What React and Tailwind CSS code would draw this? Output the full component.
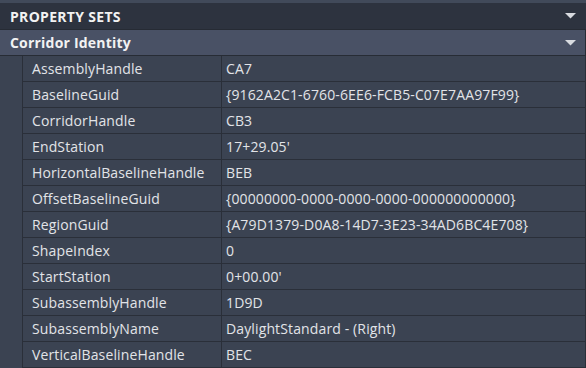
import React from "react";

const rows = [
  ["AssemblyHandle", "CA7"],
  ["BaselineGuid", "{9162A2C1-6760-6EE6-FCB5-C07E7AA97F99}"],
  ["CorridorHandle", "CB3"],
  ["EndStation", "17+29.05'"],
  ["HorizontalBaselineHandle", "BEB"],
  ["OffsetBaselineGuid", "{00000000-0000-0000-0000-000000000000}"],
  ["RegionGuid", "{A79D1379-D0A8-14D7-3E23-34AD6BC4E708}"],
  ["ShapeIndex", "0"],
  ["StartStation", "0+00.00'"],
  ["SubassemblyHandle", "1D9D"],
  ["SubassemblyName", "DaylightStandard - (Right)"],
  ["VerticalBaselineHandle", "BEC"],
];

const Caret = () => (
  <svg width="11" height="6" viewBox="0 0 11 6" className="text-[#d8dbe0]">
    <path d="M0 0h11L5.5 5.5z" fill="currentColor" />
  </svg>
);

export default function App() {
  return (
    <div
      className="w-[586px] h-[368px] bg-[#3b4352] overflow-hidden text-[14px]"
      style={{ fontFamily: '"Open Sans", "DejaVu Sans", sans-serif' }}
    >
      <div className="h-[3px] bg-[#414a5a]" />
      {/* section title */}
      <div className="h-[27px] bg-[#2d333f] border-b border-[#262b34] flex items-center justify-between pl-[10px] pr-[10px]">
        <span className="font-bold text-[#f2f2f2] tracking-[0.3px]">PROPERTY SETS</span>
        <Caret />
      </div>
      {/* group header */}
      <div className="h-[26px] bg-[#495165] border-b border-r border-[#272c35] flex items-center justify-between pl-[10px] pr-[9px]">
        <span className="font-bold text-[#f2f2f2] tracking-[0.2px]">Corridor Identity</span>
        <Caret />
      </div>
      <div className="flex">
        <div className="w-[23px] border-r border-[#2a2f39] bg-[#3b4352]" />
        <div className="flex-1 border-r border-[#2a2f39]">
          {rows.map(([k, v]) => (
            <div key={k} className="h-[26px] flex border-b border-[#2a2f39] text-[#e2e4e8] tracking-[0.13px]">
              <div className="w-[199px] border-r border-[#2a2f39] flex items-center pl-[9px]">{k}</div>
              <div className="flex-1 flex items-center pl-[4px]">{v}</div>
            </div>
          ))}
        </div>
      </div>
    </div>
  );
}
